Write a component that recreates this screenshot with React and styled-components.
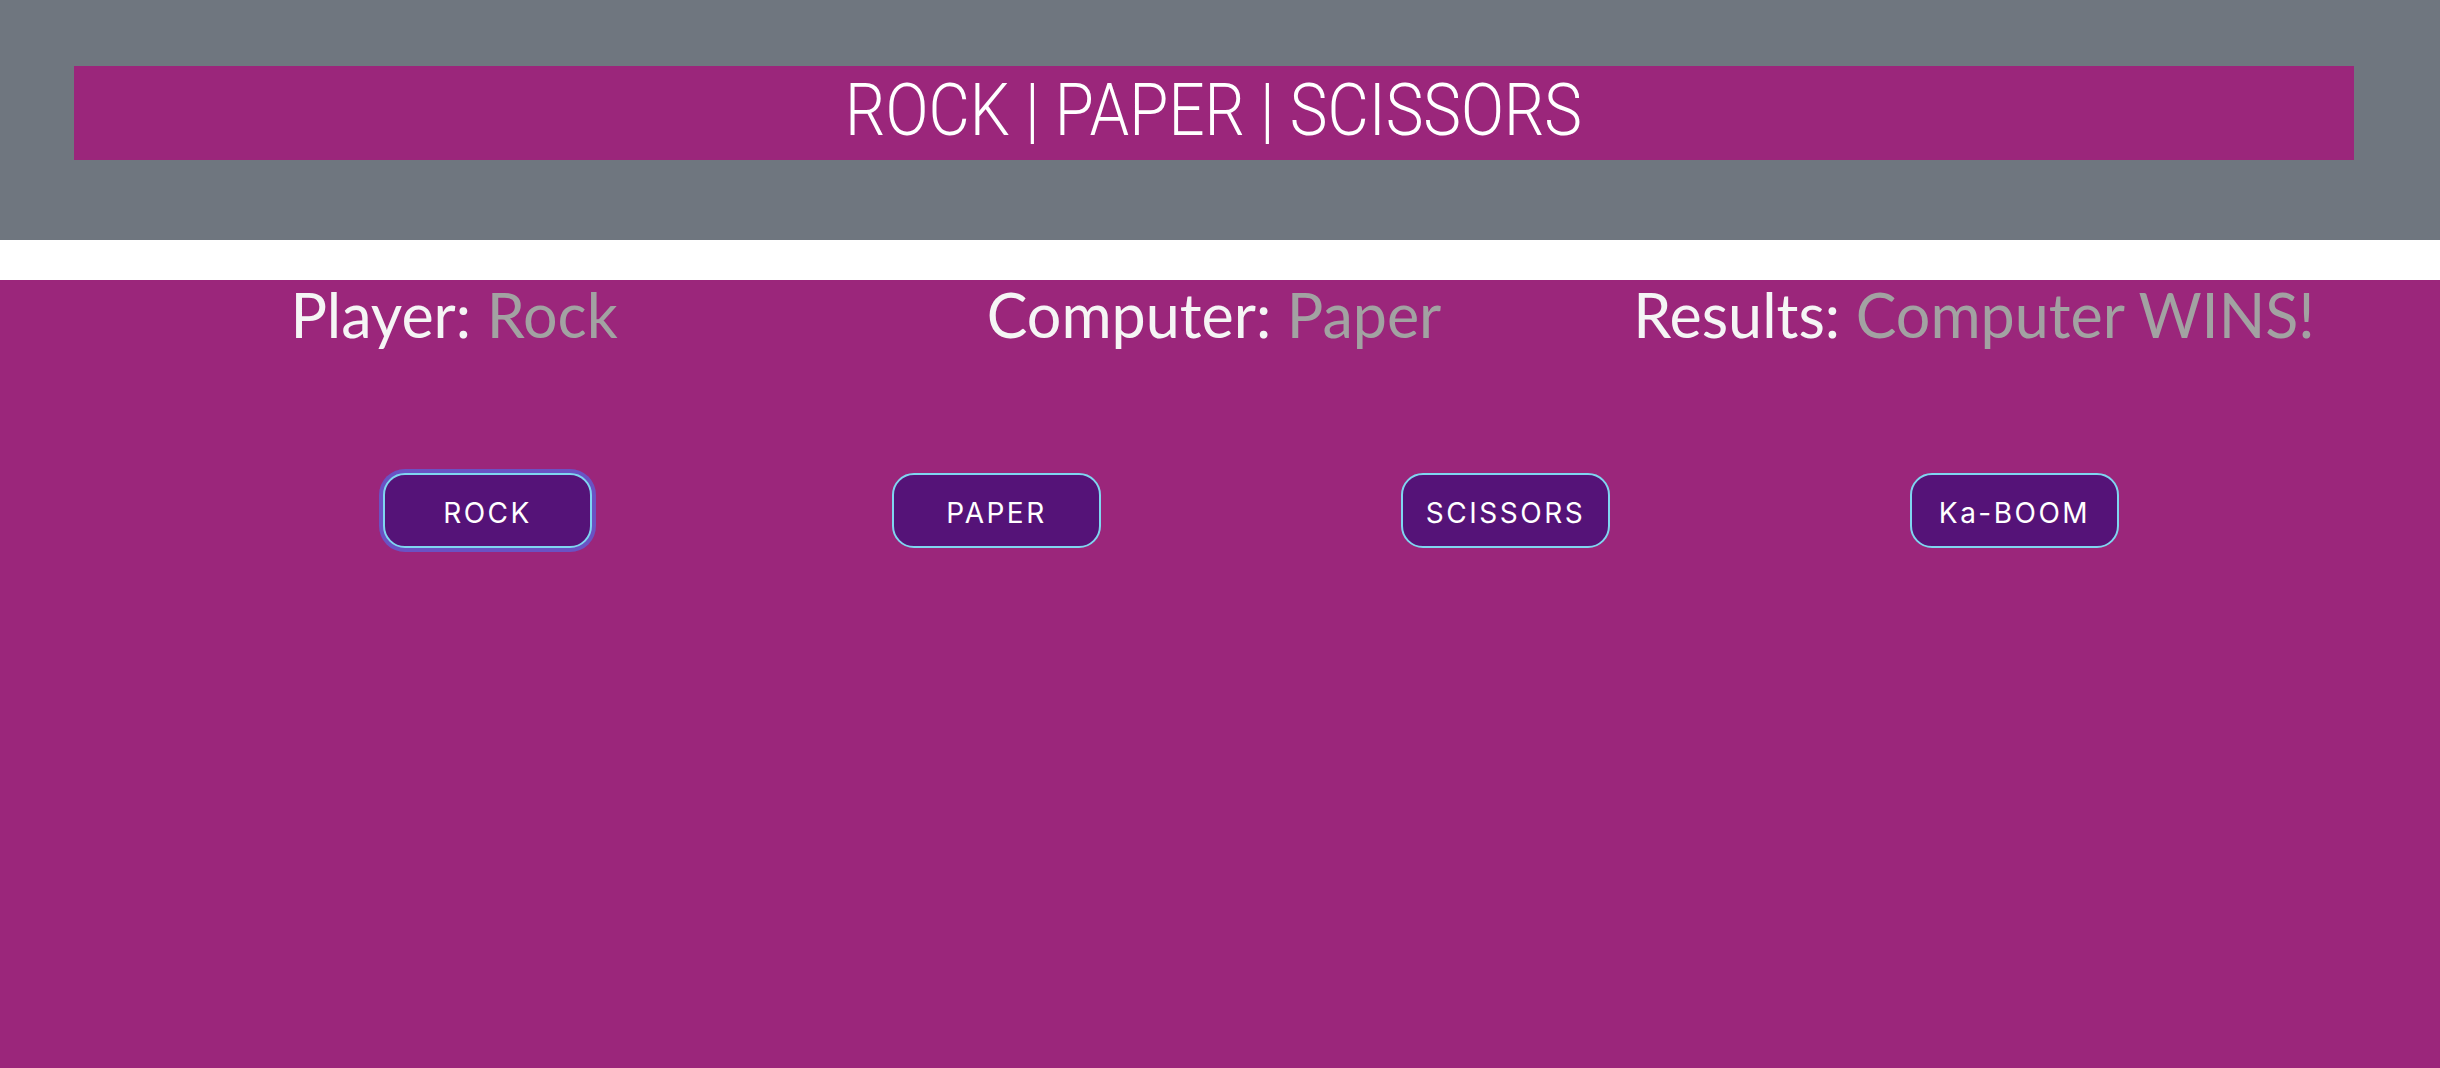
import React from "react";
import styled, { createGlobalStyle } from "styled-components";

const GlobalStyle = createGlobalStyle`
  html, body { margin: 0; padding: 0; }
  body { background: #ffffff; font-family: "Inter", "Liberation Sans", sans-serif; }
`;

const Page = styled.div`
  display: flex;
  flex-direction: column;
  min-height: 1068px;
`;

const Header = styled.header`
  background: #6f767f;
  height: 240px;
  padding: 66px 86px 0 74px;
  box-sizing: border-box;
`;

const Banner = styled.div`
  background: #9b267b;
  height: 94px;
  display: flex;
  align-items: center;
  justify-content: center;
`;

const Title = styled.h1`
  margin: 0;
  color: #ffffff;
  font-family: "Roboto", "Liberation Sans", sans-serif;
  font-weight: 300;
  font-size: 73px;
  line-height: 1;
  white-space: nowrap;
  transform: scaleX(0.87);
  padding-bottom: 5px;
`;

const Gap = styled.div`
  height: 40px;
  background: #ffffff;
`;

const Main = styled.main`
  flex: 1;
  background: #9b267b;
`;

const Stats = styled.div`
  display: grid;
  grid-template-columns: repeat(3, 1fr);
  margin: -2px 86px 0 74px;
`;

const Stat = styled.h2`
  margin: 0;
  text-align: center;
  font-family: "Lato", "Open Sans", sans-serif;
  font-weight: 400;
  font-size: 61px;
  color: #f5f5f5;
  white-space: nowrap;
`;

const Value = styled.span`
  color: #a2a2a2;
`;

const Buttons = styled.div`
  display: grid;
  grid-template-columns: repeat(4, 509px);
  justify-items: center;
  padding-left: 233px;
  margin-top: 122px;
`;

const Button = styled.button`
  width: 209px;
  height: 75px;
  box-sizing: border-box;
  background: #551378;
  border: 2px solid #7fd6f0;
  border-radius: 22px;
  color: #ffffff;
  font-family: "Inter", "Liberation Sans", sans-serif;
  font-size: 28px;
  font-weight: 400;
  letter-spacing: 2.5px;
  padding: 4px 0 0;
  cursor: pointer;
  box-shadow: ${(p) => (p.$focused ? "0 0 0 4px #6a52c4" : "none")};
`;

export default function App() {
  return (
    <Page>
      <GlobalStyle />
      <Header>
        <Banner>
          <Title>ROCK | PAPER | SCISSORS</Title>
        </Banner>
      </Header>
      <Gap />
      <Main>
        <Stats>
          <Stat>
            Player: <Value>Rock</Value>
          </Stat>
          <Stat>
            Computer: <Value>Paper</Value>
          </Stat>
          <Stat>
            Results: <Value>Computer WINS!</Value>
          </Stat>
        </Stats>
        <Buttons>
          <Button $focused>ROCK</Button>
          <Button>PAPER</Button>
          <Button>SCISSORS</Button>
          <Button>Ka-BOOM</Button>
        </Buttons>
      </Main>
    </Page>
  );
}
